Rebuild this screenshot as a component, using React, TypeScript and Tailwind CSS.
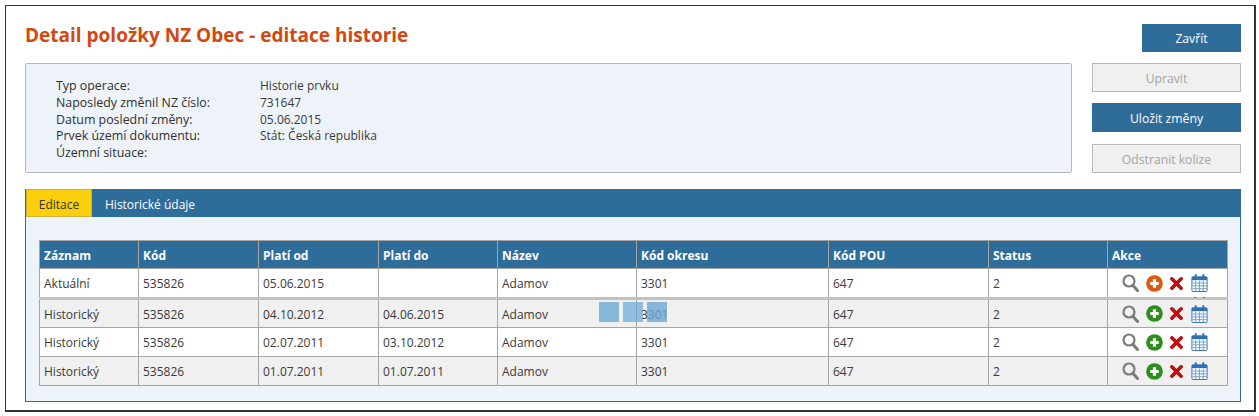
const info = [
  ["Typ operace:", "Historie prvku"],
  ["Naposledy změnil NZ číslo:", "731647"],
  ["Datum poslední změny:", "05.06.2015"],
  ["Prvek území dokumentu:", "Stát: Česká republika"],
  ["Územní situace:", ""],
];

const columns = ["Záznam", "Kód", "Platí od", "Platí do", "Název", "Kód okresu", "Kód POU", "Status", "Akce"];
const widths = [99, 120, 120, 119, 139, 192, 160, 119, 120];

const rows = [
  ["Aktuální", "535826", "05.06.2015", "", "Adamov", "3301", "647", "2"],
  ["Historický", "535826", "04.10.2012", "04.06.2015", "Adamov", "3301", "647", "2"],
  ["Historický", "535826", "02.07.2011", "03.10.2012", "Adamov", "3301", "647", "2"],
  ["Historický", "535826", "01.07.2011", "01.07.2011", "Adamov", "3301", "647", "2"],
];

function SearchIcon() {
  return (
    <svg width="17" height="18" viewBox="0 0 17 18">
      <circle cx="7" cy="7" r="5.5" fill="none" stroke="#7b7b7b" strokeWidth="2.2" />
      <path d="M11 11.5l4.5 5" stroke="#7b7b7b" strokeWidth="3" strokeLinecap="round" />
    </svg>
  );
}

function PlusIcon({ color }: { color: string }) {
  return (
    <svg width="17" height="17" viewBox="0 0 18 18">
      <circle cx="9" cy="9" r="8.8" fill={color} />
      <path d="M9 4.5v9M4.5 9h9" stroke="#fff" strokeWidth="3.4" />
    </svg>
  );
}

function CrossIcon() {
  return (
    <svg width="13" height="13" viewBox="0 0 14 14">
      <path d="M2 2l10 10M12 2L2 12" stroke="#c00d0d" strokeWidth="3.8" strokeLinecap="round" />
    </svg>
  );
}

function CalendarIcon() {
  return (
    <svg width="17" height="18" viewBox="0 0 17 19">
      <rect x="0.5" y="3" width="16" height="15.5" rx="1" fill="#fff" stroke="#2c70b5" />
      <rect x="0.5" y="3" width="16" height="3.5" fill="#2c70b5" />
      <path d="M4.5 1v4M12.5 1v4" stroke="#2c70b5" strokeWidth="2" strokeLinecap="round" />
      <path
        d="M4.5 7v11M8.5 7v11M12.5 7v11M1 9.5h15M1 12.5h15M1 15.5h15"
        stroke="#6d9fd2"
        strokeWidth="1"
      />
    </svg>
  );
}

function Btn({ label, kind, className }: { label: string; kind: "primary" | "off"; className?: string }) {
  const look =
    kind === "primary"
      ? "bg-[#2e6c99] text-white"
      : "bg-[#f0f0f0] text-[#a3a3a3] border border-[#b9b9b9]";
  return (
    <div className={`flex items-center justify-center pt-[3px] text-[12.2px] ${look} ${className ?? ""}`}>
      {label}
    </div>
  );
}

export default function App() {
  return (
    <div className="h-[416px] w-[1259px] bg-white pt-[5px] pl-[5px] font-['Open_Sans','Noto_Sans',sans-serif] text-[#3a3a3a] overflow-hidden">
      <div className="relative w-[1251px] h-[407px] border border-[#333] border-r-2 border-b-2 pt-[18px] pl-[19px] pr-[13px]">
        {/* Top part: heading + info box on the left, buttons on the right */}
        <div className="flex gap-5">
          <div className="w-[1047px]">
            <h1 className="h-[39px] text-[19px] leading-[22px] font-bold text-[#d3480f]">
              Detail položky NZ Obec - editace historie
            </h1>
            <div className="h-[110px] rounded-[2px] border border-[#b5b9bd] bg-[#eef3fa] pt-[14px] pl-[30px] text-[12px] leading-[16.8px]">
              {info.map(([label, value]) => (
                <div key={label} className="flex">
                  <span className="w-[204px] text-[12.4px] text-[#2f2f2f]">{label}</span>
                  <span>{value}</span>
                </div>
              ))}
            </div>
          </div>
          <div className="w-[149px] flex flex-col items-end gap-[11px]">
            <Btn label="Zavřít" kind="primary" className="w-[99px] h-[28px]" />
            <Btn label="Upravit" kind="off" className="w-full h-[29px]" />
            <Btn label="Uložit změny" kind="primary" className="w-full h-[29px] font-medium" />
            <Btn label="Odstranit kolize" kind="off" className="w-full h-[29px] mt-px" />
          </div>
        </div>

        {/* Tabs */}
        <div className="mt-4 w-[1216px] h-[213px] border border-t-0 border-[#2e6c99] bg-[#eef3fa]">
          <div className="flex h-[28px] bg-[#2e6c99] text-[12px]">
            <div className="w-[66px] flex items-center justify-center pt-[3px] bg-[#fbcf0b] text-[#333] border border-[#c9b13a]">
              Editace
            </div>
            <div className="pl-[13px] pt-[3px] flex items-center text-white">Historické údaje</div>
          </div>

          <div className="pt-[23px] pl-[13px]">
            <table className="table-fixed border-collapse text-[12px] w-[1188px]">
              <thead>
                <tr className="h-[28px] bg-[#2e6c99] text-white">
                  {columns.map((c, i) => (
                    <th
                      key={c}
                      style={{ width: widths[i] }}
                      className="border border-[#a5a5a5] px-1 pt-[2px] text-left font-bold"
                    >
                      {c}
                    </th>
                  ))}
                </tr>
              </thead>
              <tbody>
                {rows.map((row, r) => (
                  <tr
                    key={r}
                    className={`${r % 2 ? "bg-[#f0f0f0]" : "bg-white"} ${
                      r === 0 ? "h-[30px] border-b-[3px] border-b-[#c2c2c2]" : "h-[29px]"
                    }`}
                  >
                    {row.map((cell, i) => (
                      <td key={i} className="border border-[#a5a5a5] px-1 pt-[2px]">
                        {cell}
                      </td>
                    ))}
                    <td className="border border-[#a5a5a5] pl-[14px]">
                      <div className="flex items-center">
                        <SearchIcon />
                        <span className="ml-[7px]">
                          <PlusIcon color={r === 0 ? "#dd5a12" : "#2d8f1b"} />
                        </span>
                        <span className="ml-[7px] mr-[8px]">
                          <CrossIcon />
                        </span>
                        <CalendarIcon />
                      </div>
                    </td>
                  </tr>
                ))}
              </tbody>
            </table>
          </div>
        </div>

        {/* Drag handle ghost squares lying over the table */}
        <div className="absolute left-[593px] top-[296px] flex gap-1">
          <div className="w-5 h-5 bg-[#6ba7d3]/80" />
          <div className="w-5 h-5 bg-[#6ba7d3]/70" />
          <div className="w-5 h-5 bg-[#6ba7d3]/80" />
        </div>
        {/* Calendar ring tips peeking over the thick row border */}
        <div className="absolute left-[1188px] top-[291px] w-[2px] h-px bg-[#2c70b5]" />
        <div className="absolute left-[1197px] top-[291px] w-[2px] h-px bg-[#2c70b5]" />
      </div>
    </div>
  );
}
